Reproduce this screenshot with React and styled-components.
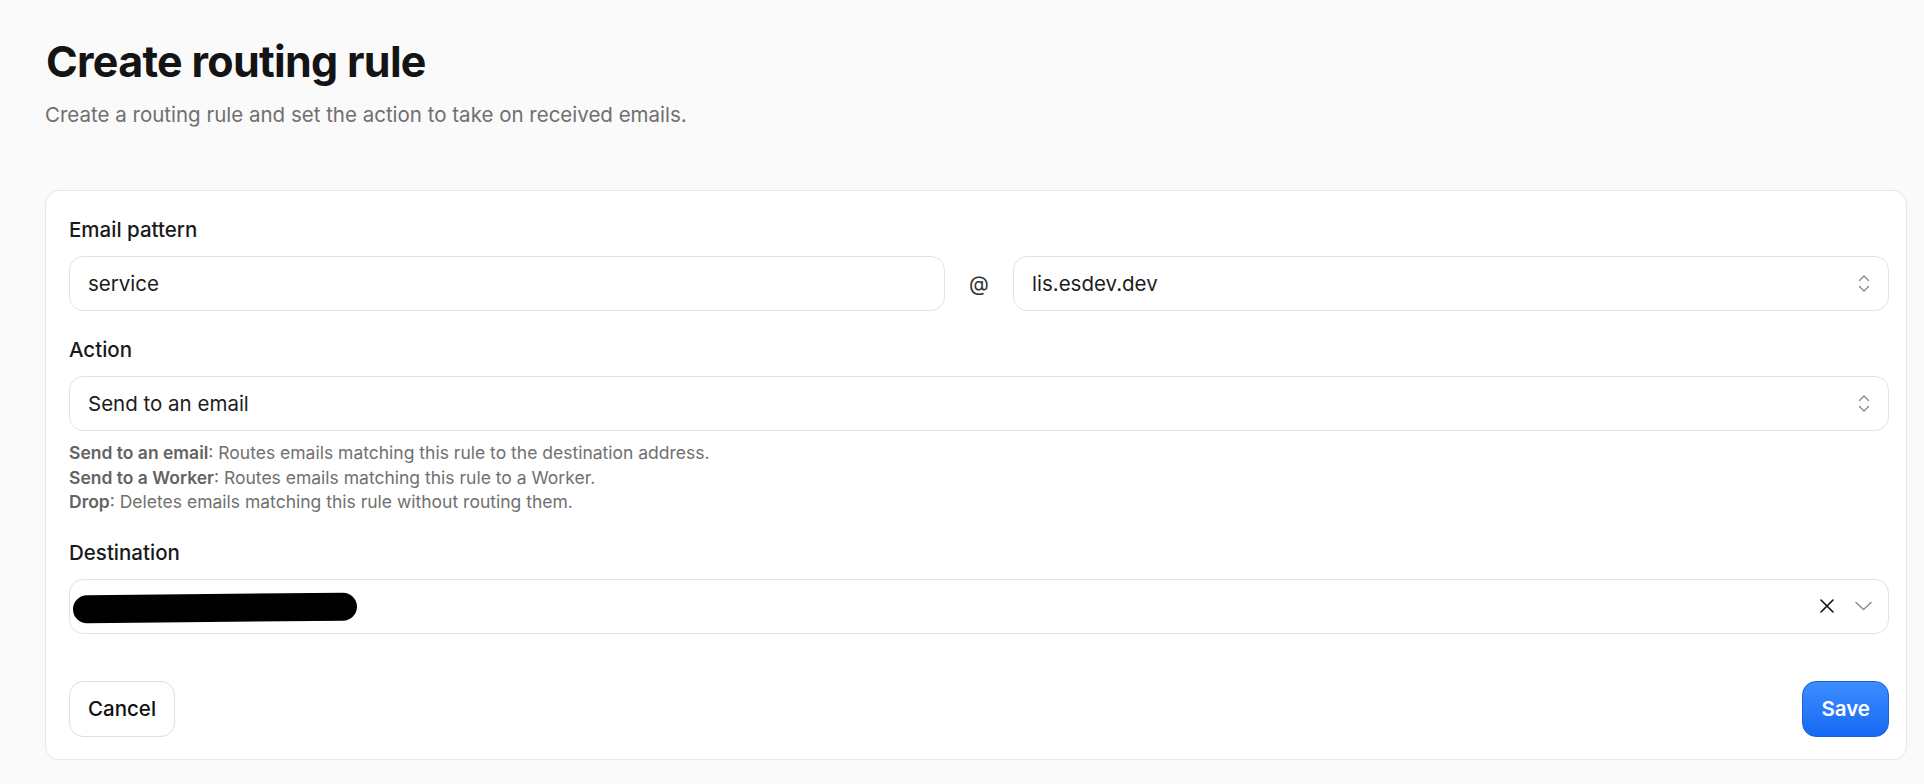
import React from "react";
import styled, { createGlobalStyle } from "styled-components";

const GlobalStyle = createGlobalStyle`
  body {
    margin: 0;
    background: #fafafa;
    font-family: Inter, "Noto Sans", Arial, sans-serif;
    color: #161616;
  }
`;

const Page = styled.div`
  padding: 35px 17px 24px 45px;
`;

const Title = styled.h1`
  margin: 0 0 0 1px;
  font-size: 43px;
  line-height: 52px;
  font-weight: 700;
  letter-spacing: -0.7px;
  color: #141414;
`;

const SubTitle = styled.p`
  margin: 14px 0 0 0;
  font-size: 20.5px;
  line-height: 28px;
  color: #6f6f6f;
`;

const Card = styled.div`
  margin-top: 61px;
  background: #fff;
  border: 1px solid #e7e7e7;
  border-radius: 14px;
  padding: 27px 17px 22px 23px;
  display: flex;
  flex-direction: column;
`;

const Field = styled.div`
  display: flex;
  flex-direction: column;
  gap: 14px;
  margin-top: ${(p) => p.$top || 0}px;
`;

const Label = styled.div`
  font-size: 20.5px;
  line-height: 24px;
  font-weight: 500;
  color: #1a1a1a;
`;

const Row = styled.div`
  display: flex;
  align-items: center;
`;

const Control = styled.div`
  flex: ${(p) => (p.$inline ? "1 1 0" : "none")};
  height: 55px;
  box-sizing: border-box;
  border: 1px solid #e2e2e2;
  border-radius: 14px;
  background: #fff;
  display: flex;
  align-items: center;
  padding: 0 18px;
  font-size: 20.5px;
  color: #1c1c1c;
`;

const Value = styled.span`
  flex: 1;
`;

const At = styled.span`
  width: 68px;
  text-align: center;
  font-size: 20.5px;
  color: #333;
`;

const Help = styled.div`
  margin-top: 10px;
  font-size: 17.5px;
  line-height: 24.5px;
  color: #707070;

  b {
    font-weight: 600;
    color: #636363;
  }
`;

const Redacted = styled.span`
  display: block;
  width: 284px;
  height: 28px;
  margin-left: -15px;
  margin-top: 3px;
  background: #000;
  border-radius: 14px;
  transform: rotate(-0.6deg);
`;

const Icons = styled.div`
  display: flex;
  align-items: center;
  gap: 20px;
  margin-right: -2px;
`;

const Actions = styled.div`
  margin-top: 47px;
  display: flex;
  justify-content: space-between;
`;

const Button = styled.button`
  height: 56px;
  padding: 0 18px;
  border-radius: 14px;
  font-family: inherit;
  font-size: 20.5px;
  cursor: pointer;
  border: 1px solid ${(p) => (p.$primary ? "#1b61d6" : "#dedede")};
  color: ${(p) => (p.$primary ? "#fff" : "#111")};
  background: ${(p) =>
    p.$primary ? "linear-gradient(#3d8dff, #1669f3)" : "#fff"};
  font-weight: ${(p) => (p.$primary ? 600 : 500)};
`;

const UpDown = () => (
  <svg width="12" height="19" viewBox="0 0 12 19" fill="none" stroke="#8a8a8a" strokeWidth="1.4" strokeLinecap="round" strokeLinejoin="round">
    <path d="M1.5 6.5 6 2l4.5 4.5" />
    <path d="M1.5 12.5 6 17l4.5-4.5" />
  </svg>
);

const Clear = () => (
  <svg width="16" height="16" viewBox="0 0 16 16" fill="none" stroke="#111" strokeWidth="1.6" strokeLinecap="round">
    <path d="M2 2l12 12M14 2 2 14" />
  </svg>
);

const Down = () => (
  <svg width="17" height="10" viewBox="0 0 17 10" fill="none" stroke="#8a8a8a" strokeWidth="1.4" strokeLinecap="round" strokeLinejoin="round">
    <path d="M1 1.5l7.5 7 7.5-7" />
  </svg>
);

export default function App() {
  return (
    <>
      <GlobalStyle />
      <Page>
        <Title>Create routing rule</Title>
        <SubTitle>Create a routing rule and set the action to take on received emails.</SubTitle>
        <Card>
          <Field>
            <Label>Email pattern</Label>
            <Row>
              <Control $inline>
                <Value>service</Value>
              </Control>
              <At>@</At>
              <Control $inline>
                <Value>lis.esdev.dev</Value>
                <UpDown />
              </Control>
            </Row>
          </Field>
          <Field $top={27}>
            <Label>Action</Label>
            <Control>
              <Value>Send to an email</Value>
              <UpDown />
            </Control>
          </Field>
          <Help>
            <div><b>Send to an email</b>: Routes emails matching this rule to the destination address.</div>
            <div><b>Send to a Worker</b>: Routes emails matching this rule to a Worker.</div>
            <div><b>Drop</b>: Deletes emails matching this rule without routing them.</div>
          </Help>
          <Field $top={26}>
            <Label>Destination</Label>
            <Control>
              <Value>
                <Redacted />
              </Value>
              <Icons>
                <Clear />
                <Down />
              </Icons>
            </Control>
          </Field>
          <Actions>
            <Button>Cancel</Button>
            <Button $primary>Save</Button>
          </Actions>
        </Card>
      </Page>
    </>
  );
}
